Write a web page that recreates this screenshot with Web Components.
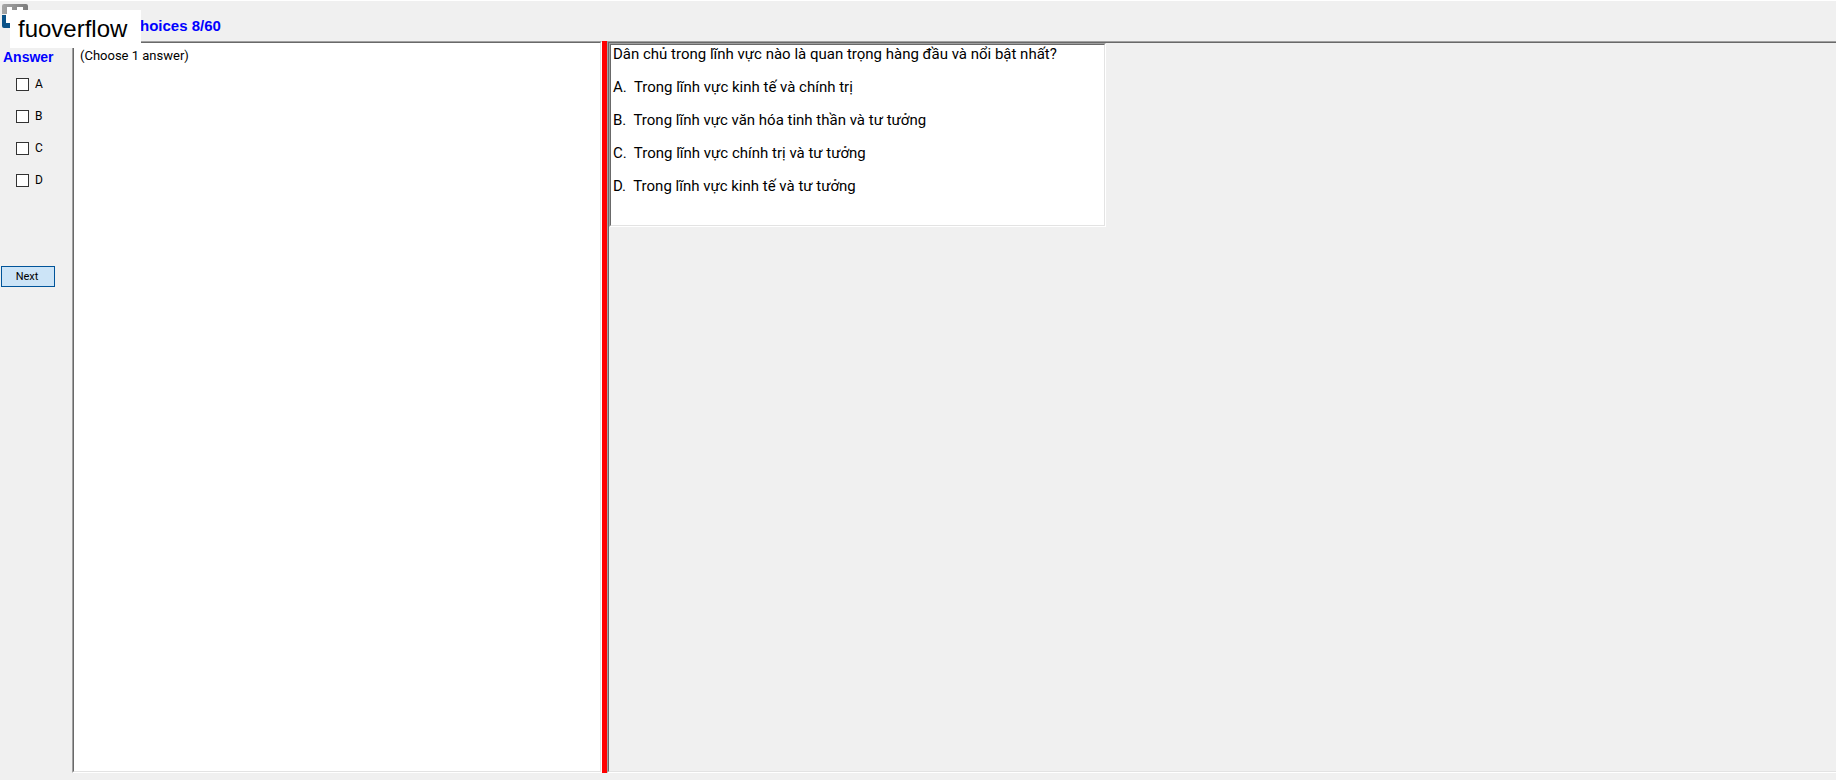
<!DOCTYPE html>
<html lang="vi">
<head>
<meta charset="utf-8">
<title>Exam</title>
<style>
  html, body { height: 100%; }
  body {
    margin: 0;
    background: #f0f0f0;
    color: #000;
    font-family: Roboto, "Liberation Sans", sans-serif;
  }
</style>
</head>
<body>
<exam-window>
  <exam-header slot="header" mark="fuoverflow">hoices 8/60</exam-header>
  <answer-list slot="answers" options="A,B,C,D">Answer</answer-list>
  <sunken-panel slot="left"><p>(Choose 1 answer)</p></sunken-panel>
  <sunken-panel slot="right" plain>
    <question-box>
      <p>Dân chủ trong lĩnh vực nào là quan trọng hàng đầu và nổi bật nhất?</p>
      <p>A.&nbsp; Trong lĩnh vực kinh tế và chính trị</p>
      <p>B.&nbsp; Trong lĩnh vực văn hóa tinh thần và tư tưởng</p>
      <p>C.&nbsp; Trong lĩnh vực chính trị và tư tưởng</p>
      <p>D.&nbsp; Trong lĩnh vực kinh tế và tư tưởng</p>
    </question-box>
  </sunken-panel>
</exam-window>

<script>
class BaseElement extends HTMLElement {
  constructor() {
    super();
    this.attachShadow({ mode: "open" });
  }
  render() {
    const template = document.createElement("template");
    template.innerHTML = this.getStyles() + this.getTemplate();
    this.shadowRoot.replaceChildren(template.content.cloneNode(true));
  }
  connectedCallback() {
    this.render();
  }
}

// Whole window: header row, then answers | text | splitter | question
class ExamWindow extends BaseElement {
  getTemplate() {
    return `
      <slot name="header"></slot>
      <main>
        <slot name="answers"></slot>
        <div class="left"><slot name="left"></slot></div>
        <div class="splitter"></div>
        <div class="right"><slot name="right"></slot></div>
      </main>
    `;
  }
  getStyles() {
    return `
      <style>
        :host {
          display: flex;
          flex-direction: column;
          box-sizing: border-box;
          height: 100vh;
          padding-bottom: 7px;
          border-top: 1px solid #fff;
          overflow: hidden;
        }
        main { flex: 1; display: flex; min-height: 0; }
        .left { flex: 530 1 0; display: flex; }
        .splitter { flex: none; width: 5px; background: #f00; }
        .right { flex: 1229 1 0; display: flex; }
        ::slotted(sunken-panel) { flex: 1; }
      </style>
    `;
  }
}

class ExamHeader extends BaseElement {
  getTemplate() {
    return `
      <svg width="28" height="28" viewBox="0 0 28 28" aria-hidden="true">
        <defs>
          <linearGradient id="steel" x1="0" x2="1">
            <stop offset="0" stop-color="#a6a6a6"/>
            <stop offset="1" stop-color="#7c7c7c"/>
          </linearGradient>
        </defs>
        <path fill="#fff" d="M6 6h17v17H6z"/>
        <path fill="url(#steel)" d="M2 5q0-2 2-2h22q2 0 2 2v9h-5V6h-6v5h-5V6H7v7H2z"/>
        <path fill="#0b5288" d="M2 14h4v8h8v5H4q-2 0-2-2z"/>
      </svg>
      <span class="mark">${this.getAttribute("mark")}</span>
      <h1><slot></slot></h1>
    `;
  }
  getStyles() {
    return `
      <style>
        :host {
          display: flex;
          position: relative;
          height: 40px;
          font-family: "Liberation Sans", Arial, sans-serif;
        }
        svg { flex: none; }
        h1 {
          margin: 16px 0 0 112px;
          color: #00f;
          font-size: 15px;
          line-height: 18px;
        }
        /* floating label over the corner */
        .mark {
          position: absolute;
          left: 10px;
          top: 9px;
          z-index: 1;
          padding: 4px 14px 4px 8px;
          background: #fff;
          font-size: 24px;
          line-height: 30px;
        }
      </style>
    `;
  }
}

class AnswerList extends BaseElement {
  getTemplate() {
    const rows = this.getAttribute("options").split(",").map((name) => `
      <label><input type="checkbox" name="${name}">${name}</label>
    `).join("");
    return `
      <h2><slot></slot></h2>
      <div class="rows">${rows}</div>
      <button type="button">Next</button>
    `;
  }
  getStyles() {
    return `
      <style>
        :host { display: block; flex: none; width: 72px; }
        h2 {
          margin: 8px 0 11px 3px;
          color: #00f;
          font: bold 14px/16px "Liberation Sans", Arial, sans-serif;
        }
        .rows {
          display: flex;
          flex-direction: column;
          gap: 16px;
          padding-left: 16px;
        }
        label {
          display: flex;
          align-items: center;
          gap: 6px;
          height: 16px;
          font-size: 12px;
        }
        input {
          appearance: none;
          box-sizing: border-box;
          width: 13px;
          height: 13px;
          margin: 0;
          border: 1px solid #333;
          background: #fff;
        }
        input:checked { background: #333; }
        button {
          display: block;
          width: 54px;
          height: 21px;
          margin: 78px 0 0 1px;
          padding: 0 2px 0 0;
          border: 1px solid #005499;
          background: #cce4f7;
          color: #000;
          font: 11px Roboto, sans-serif;
        }
      </style>
    `;
  }
}

// Classic 3D inset frame, two pixels deep
class SunkenPanel extends BaseElement {
  getTemplate() {
    return `<div class="inner"><slot></slot></div>`;
  }
  getStyles() {
    return `
      <style>
        :host {
          display: flex;
          background: #fff;
          border: 1px solid;
          border-color: #a0a0a0 #fff #fff #a0a0a0;
        }
        :host([plain]) { background: #f0f0f0; border-right: 0; }
        .inner {
          flex: 1;
          border: 1px solid;
          border-color: #696969 #e3e3e3 #e3e3e3 #696969;
        }
        :host([plain]) .inner { border-right: 0; }
        ::slotted(p) {
          margin: 5px 6px;
          font-size: 13px;
          line-height: 16px;
        }
      </style>
    `;
  }
}

class QuestionBox extends BaseElement {
  getTemplate() {
    return `<div class="inner"><slot></slot></div>`;
  }
  getStyles() {
    return `
      <style>
        :host {
          display: block;
          box-sizing: border-box;
          width: 497px;
          background: #fff;
          border: 1px solid;
          border-color: #a0a0a0 #fff #fff #a0a0a0;
        }
        .inner {
          padding: 0 2px 15px;
          border: 1px solid;
          border-color: #696969 #e3e3e3 #e3e3e3 #696969;
        }
        ::slotted(p) {
          margin: 0 0 15px;
          font-size: 15px;
          line-height: 18px;
        }
      </style>
    `;
  }
}

customElements.define("exam-window", ExamWindow);
customElements.define("exam-header", ExamHeader);
customElements.define("answer-list", AnswerList);
customElements.define("sunken-panel", SunkenPanel);
customElements.define("question-box", QuestionBox);
</script>
</body>
</html>
